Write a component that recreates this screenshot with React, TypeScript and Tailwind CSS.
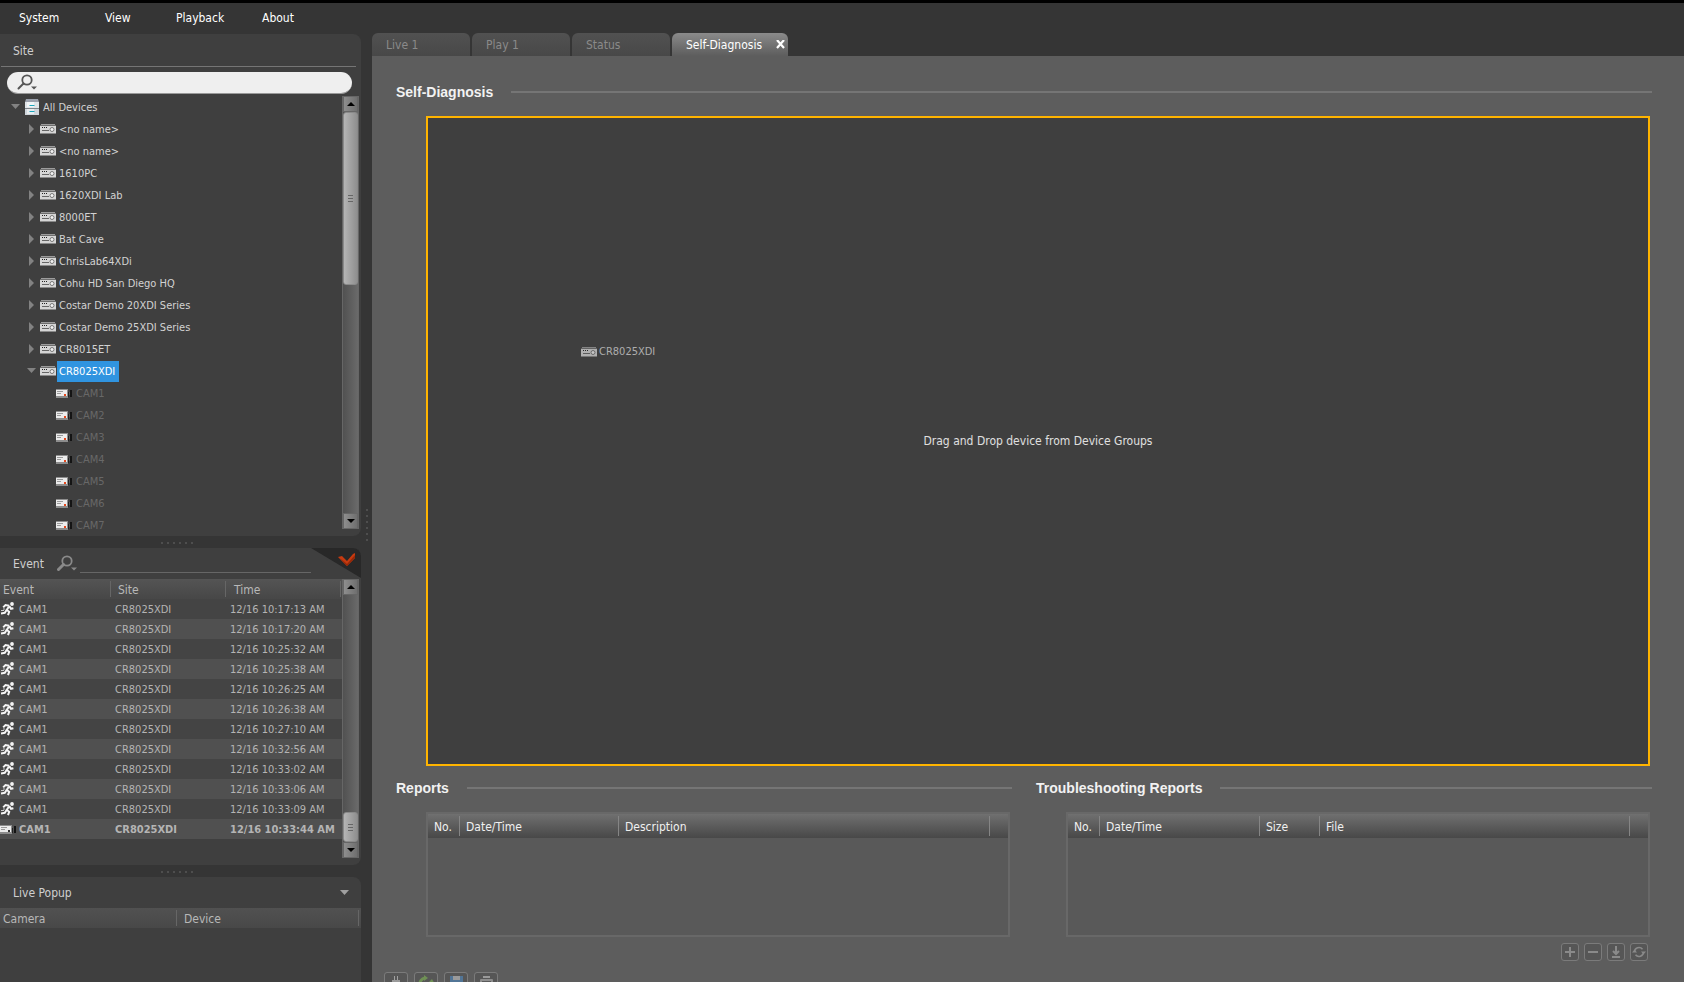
import type { ReactNode } from "react";

const devices = [
  "<no name>",
  "<no name>",
  "1610PC",
  "1620XDI Lab",
  "8000ET",
  "Bat Cave",
  "ChrisLab64XDi",
  "Cohu HD San Diego HQ",
  "Costar Demo 20XDI Series",
  "Costar Demo 25XDI Series",
  "CR8015ET",
];
const cameras = ["CAM1", "CAM2", "CAM3", "CAM4", "CAM5", "CAM6", "CAM7"];
const eventTimes = [
  "12/16 10:17:13 AM",
  "12/16 10:17:20 AM",
  "12/16 10:25:32 AM",
  "12/16 10:25:38 AM",
  "12/16 10:26:25 AM",
  "12/16 10:26:38 AM",
  "12/16 10:27:10 AM",
  "12/16 10:32:56 AM",
  "12/16 10:33:02 AM",
  "12/16 10:33:06 AM",
  "12/16 10:33:09 AM",
  "12/16 10:33:44 AM",
];

function RecorderIcon() {
  return (
    <svg width="16" height="10" viewBox="0 0 16 10" className="shrink-0" aria-hidden="true">
      <rect x="1" y="0" width="14" height="1" fill="#9c9c9c" />
      <rect x="0" y="1" width="16" height="1" fill="#6e6e6e" />
      <rect x="0" y="2" width="16" height="7" fill="#d6d6d6" />
      <rect x="0" y="9" width="16" height="1" fill="#8a8a8a" />
      <path d="M2 3.5h1M4 3.5h1M6 3.5h1" stroke="#222" />
      <path d="M2 6.500h7" stroke="#666" />
      <circle cx="12" cy="5.500" r="2" fill="#f2f2f2" stroke="#777" />
    </svg>
  );
}

function CameraIcon({ led = "#e8481c" }: { led?: string }) {
  return (
    <svg width="16" height="9" viewBox="0 0 16 9" className="shrink-0" aria-hidden="true">
      <rect x="0" y="0" width="12" height="9" fill="#8d8d8d" />
      <rect x="0" y="1" width="11" height="6" fill="#ececec" />
      <path d="M1 2.5h6M1 4.5h4" stroke="#9a9a9a" />
      <rect x="8" y="5" width="2" height="2" fill={led} />
      <rect x="12" y="3" width="1" height="5" fill="#222" />
      <rect x="13" y="3" width="1" height="3" fill="#555" />
      <rect x="14" y="1" width="2" height="7" fill="#141414" />
    </svg>
  );
}

function RunnerIcon() {
  return (
    <svg width="14" height="14" viewBox="0 0 14 14" aria-hidden="true">
      <circle cx="12" cy="2" r="1.9" fill="#f4f4f4" />
      <path
        d="M9.600 3.600L6.500 8.200M9.200 3.800L5.500 3L3.200 5.400M9.600 4.400L11 6.800L13.400 6.200M6.800 8L9.200 9.800L8 13.200M6.600 8L4.800 10.800L1 11.400"
        stroke="#f4f4f4"
        strokeWidth="2"
        fill="none"
      />
      <path d="M1 8.500h3M3 7h2" stroke="#c9c9c9" />
    </svg>
  );
}

function CabinetIcon() {
  return (
    <svg width="14" height="16" viewBox="0 0 14 16" className="shrink-0" aria-hidden="true">
      <path d="M1 0h12l1 3H0z" fill="#9aa0ac" />
      <rect y="3" width="14" height="6" fill="#dfe4e8" />
      <rect y="10" width="14" height="6" fill="#cfd6dc" />
      <rect y="9" width="14" height="1" fill="#7d8389" />
      <rect x="2" y="3" width="7" height="5" fill="#f2f5f7" />
      <rect x="2" y="10" width="7" height="5" fill="#e8ecef" />
      <path d="M4.500 6.500h5M4.500 12.500h5" stroke="#1aa6bd" />
    </svg>
  );
}

function SearchIcon({ color, handle = 2 }: { color: string; handle?: number }) {
  return (
    <svg width="22" height="17" viewBox="0 0 22 17" className="shrink-0" aria-hidden="true">
      <circle cx="10" cy="6" r="4.700" fill="none" stroke={color} strokeWidth="1.800" />
      <path d="M6.500 9.500L1.500 14.500" stroke={color} strokeWidth={handle} strokeLinecap="round" />
      <path d="M14 12.500h6l-3 3z" fill={color} />
    </svg>
  );
}

function Arrow({ open }: { open?: boolean }) {
  return (
    <button aria-label={open ? "Collapse" : "Expand"} className="flex w-4 shrink-0 justify-center">
      <svg width="10" height="10" viewBox="0 0 10 10" fill="#828282" aria-hidden="true">
        {open ? <path d="M0 2h9L4.500 7z" /> : <path d="M2 0l5 5l-5 5z" />}
      </svg>
    </button>
  );
}

function StepButton({ down }: { down?: boolean }) {
  return (
    <button
      aria-label={down ? "Scroll down" : "Scroll up"}
      className="flex h-4 shrink-0 items-center justify-center border border-[#666] bg-linear-to-r from-[#8e8e8e] to-[#6f6f6f]"
    >
      <svg width="8" height="4" viewBox="0 0 8 4" aria-hidden="true">
        {down ? <path d="M0 0h8L4 4z" /> : <path d="M0 4h8L4 0z" />}
      </svg>
    </button>
  );
}

function ScrollBar({ end, thumb }: { end?: boolean; thumb: string }) {
  return (
    <div className="mr-[2px] mb-[7px] flex w-[17px] shrink-0 flex-col border-x border-[#666] bg-linear-to-r from-[#515151] to-[#6a6a6a]">
      <StepButton />
      {end && <div className="flex-1" />}
      <div
        className={`flex flex-col items-center justify-center gap-[2px] rounded-[3px] border border-[#8a8a8a] bg-linear-to-r from-[#b5b5b5] to-[#8f8f8f] ${thumb}`}
      >
        <span className="h-px w-[5px] bg-[#666]" />
        <span className="h-px w-[5px] bg-[#666]" />
        <span className="h-px w-[5px] bg-[#666]" />
      </div>
      {!end && <div className="flex-1" />}
      <StepButton down />
    </div>
  );
}

function Grip({ vertical }: { vertical?: boolean }) {
  return (
    <div className={vertical ? "flex flex-col gap-1" : "flex gap-1"}>
      {[0, 1, 2, 3, 4, 5].map((i) => (
        <span key={i} className="size-[2px] bg-[#4e4e4e]" />
      ))}
    </div>
  );
}

function Splitter() {
  return (
    <div className="flex h-3 shrink-0 items-center justify-center pt-px pr-2">
      <Grip />
    </div>
  );
}

function SectionTitle({ children }: { children: ReactNode }) {
  return (
    <div className="flex h-5 items-center gap-[18px]">
      <h2 className="font-['Liberation_Sans',sans-serif] text-[14px] font-bold whitespace-nowrap text-[#f2f2f2]">
        {children}
      </h2>
      <div className="h-[2px] flex-1 bg-[#757575]" />
    </div>
  );
}

function ReportTable({ label, columns }: { label: string; columns: { name: string; width: string }[] }) {
  return (
    <div className="mr-[2px] ml-[30px] h-[125px] border-2 border-[#686868] bg-[#595959]">
      <table aria-label={label} className="w-full table-fixed border-collapse">
        <thead>
          <tr className="h-6 bg-linear-to-b from-[#707070] to-[#484848] text-left text-[12px] text-[#f0f0f0]">
            {columns.map((c) => (
              <th key={c.name} className={`p-0 font-normal ${c.width}`}>
                <div className="flex h-5 items-center border-r border-[#858585] pt-[2px] pl-[6px]">{c.name}</div>
              </th>
            ))}
            <td className="w-[18px] p-0" />
          </tr>
        </thead>
      </table>
    </div>
  );
}

function ToolButton({ label, children }: { label: string; children: ReactNode }) {
  return (
    <button
      aria-label={label}
      className="flex size-[18px] items-center justify-center rounded-[3px] border border-[#7b7b7b] bg-[#565656]"
    >
      <svg width="14" height="14" viewBox="0 0 14 14" fill="none" stroke="#8a8a8a" strokeWidth="2" aria-hidden="true">
        {children}
      </svg>
    </button>
  );
}

function BottomButton({ label, children }: { label: string; children: ReactNode }) {
  return (
    <button
      aria-label={label}
      className="flex size-6 items-center justify-center rounded-[3px] border border-[#7b7b7b] bg-[#565656]"
    >
      <svg width="18" height="18" viewBox="0 0 18 18" fill="none" aria-hidden="true">
        {children}
      </svg>
    </button>
  );
}

function SitePanel() {
  return (
    <section className="flex min-h-0 flex-1 flex-col rounded-r-lg bg-[#3f3f3f]">
      <h2 className="mr-[5px] ml-px flex h-[33px] shrink-0 items-center border-b border-[#757575] pt-[2px] pl-3 text-[12px] text-[#cfcfcf]">
        Site
      </h2>
      <label className="mt-[5px] mr-[9px] ml-[7px] flex h-[22px] shrink-0 items-center rounded-full border-b border-[#999] bg-[#efefef] pl-[10px]">
        <SearchIcon color="#555" />
        <input aria-label="Search devices" className="min-w-0 flex-1 bg-transparent text-[12px] text-[#222] outline-none" />
      </label>
      <div className="mt-[2px] flex min-h-0 flex-1">
        <ul className="min-w-0 flex-1 overflow-hidden text-[11px] whitespace-nowrap text-[#d2d2d2]">
          <li className="flex h-[22px] items-center pl-2">
            <Arrow open />
            <span className="ml-px flex items-center gap-1">
              <CabinetIcon />
              <span className="pt-[2px]">All Devices</span>
            </span>
          </li>
          {devices.map((d, i) => (
            <li key={i} className="flex h-[22px] items-center pl-6">
              <Arrow />
              <RecorderIcon />
              <span className="pt-[2px] pl-[3px]">{d}</span>
            </li>
          ))}
          <li className="flex h-[22px] items-center pl-6">
            <Arrow open />
            <RecorderIcon />
            <span className="ml-px flex h-[21px] items-center bg-[#3094e0] pt-[2px] pr-1 pl-[2px] text-white">
              CR8025XDI
            </span>
          </li>
          {cameras.map((c) => (
            <li key={c} className="flex h-[22px] items-center gap-1 pl-14 text-[#686868]">
              <CameraIcon />
              <span className="pt-[2px]">{c}</span>
            </li>
          ))}
        </ul>
        <ScrollBar thumb="h-[173px]" />
      </div>
    </section>
  );
}

function EventPanel() {
  return (
    <section className="relative shrink-0 overflow-hidden rounded-r-lg bg-[#3f3f3f]">
      <div className="flex h-[31px] items-center pl-[13px]">
        <h2 className="w-11 text-[12px] text-[#cfcfcf]">Event</h2>
        <label className="flex flex-1 items-center">
          <SearchIcon color="#8a8a8a" handle={3} />
          <input
            aria-label="Search events"
            className="mr-[50px] ml-px h-[19px] min-w-0 flex-1 border-b border-[#666] bg-transparent text-[12px] text-[#ccc] outline-none"
          />
        </label>
      </div>
      <button aria-label="Toggle event filter" className="absolute top-0 right-0">
        <svg width="50" height="31" viewBox="0 0 50 31" aria-hidden="true">
          <path d="M0 0h50v30z" fill="#282828" />
          <path d="M27 9l4-1l5 5l6-7l2-1v5l-8 8z" fill="#c63a10" />
          <path d="M29 10l7 6l8-9v3l-8 8z" fill="#962808" />
        </svg>
      </button>
      <div className="flex">
        <table
          aria-label="Events"
          className="mb-[26px] min-w-0 flex-1 table-fixed border-collapse text-[11px] whitespace-nowrap text-[#b4b4b4]"
        >
          <thead>
            <tr className="h-5 bg-linear-to-b from-[#545454] to-[#474747] text-left text-[12px] text-[#b8b8b8]">
              <th className="w-[111px] p-0 font-normal">
                <div className="flex h-4 items-center border-r border-[#666] pt-[2px] pl-[3px]">Event</div>
              </th>
              <th className="w-[115px] p-0 font-normal">
                <div className="flex h-4 items-center border-r border-[#666] pt-[2px] pl-[7px]">Site</div>
              </th>
              <th className="w-[116px] p-0 font-normal">
                <div className="mr-px flex h-4 items-center border-r border-[#666] pt-[2px] pl-2">Time</div>
              </th>
            </tr>
          </thead>
          <tbody>
            {eventTimes.map((t, i) => {
              const last = i === eventTimes.length - 1;
              return (
                <tr key={t} className={`h-5 ${i % 2 ? "bg-[#505050]" : "bg-[#444]"} ${last ? "font-bold" : ""}`}>
                  <td className="p-0">
                    <div className="flex items-center">
                      <span className="w-[19px]">{last ? <CameraIcon led="#333" /> : <RunnerIcon />}</span>
                      <span className="pt-[2px]">CAM1</span>
                    </div>
                  </td>
                  <td className="p-0 pt-[2px] pl-1">CR8025XDI</td>
                  <td className="p-0 pt-[2px] pl-1">{t}</td>
                </tr>
              );
            })}
          </tbody>
        </table>
        <ScrollBar end thumb="h-[30px]" />
      </div>
    </section>
  );
}

function LivePopupPanel() {
  return (
    <section className="h-[105px] shrink-0 rounded-tr-lg bg-[#3f3f3f]">
      <div className="flex h-[31px] items-center justify-between pr-3 pl-[13px]">
        <h2 className="text-[12px] text-[#cfcfcf]">Live Popup</h2>
        <button aria-label="Live popup options">
          <svg width="9" height="5" viewBox="0 0 9 5" fill="#a0a0a0" aria-hidden="true">
            <path d="M0 0h9L4.500 5z" />
          </svg>
        </button>
      </div>
      <table aria-label="Live popups" className="w-full table-fixed border-collapse">
        <thead>
          <tr className="h-5 bg-linear-to-b from-[#515151] to-[#484848] text-left text-[12px] text-[#b8b8b8]">
            <th className="w-[177px] p-0 font-normal">
              <div className="flex h-4 items-center border-r border-[#666] pt-[2px] pl-[3px]">Camera</div>
            </th>
            <th className="p-0 font-normal">
              <div className="mr-[2px] flex h-4 items-center border-r border-[#666] pt-[2px] pl-[7px]">Device</div>
            </th>
          </tr>
        </thead>
      </table>
    </section>
  );
}

export default function App() {
  return (
    <div className="flex h-screen flex-col overflow-hidden border-t-[3px] border-black bg-[#353535] font-['DejaVu_Sans_Condensed','Noto_Sans',sans-serif]">
      <div className="flex min-h-0 flex-1">
        <aside className="flex w-[361px] shrink-0 flex-col">
          <nav className="flex h-[31px] shrink-0 items-center pb-[2px] pl-[19px] text-[12px] text-white">
            <button className="w-[86px] text-left">System</button>
            <button className="w-[71px] text-left">View</button>
            <button className="w-[86px] text-left">Playback</button>
            <button className="text-left">About</button>
          </nav>
          <SitePanel />
          <Splitter />
          <EventPanel />
          <Splitter />
          <LivePopupPanel />
        </aside>
        <div className="flex w-[11px] shrink-0 items-center justify-center pt-[65px]">
          <Grip vertical />
        </div>
        <main className="flex min-w-0 flex-1 flex-col pt-[30px]">
          <div role="tablist" className="flex h-[23px] shrink-0 gap-[2px] text-[12px] text-[#8a8a8a]">
            {["Live 1", "Play 1", "Status"].map((t) => (
              <button
                key={t}
                role="tab"
                className="w-[98px] rounded-t-md bg-linear-to-b from-[#515151] to-[#484848] pl-[14px] text-left"
              >
                {t}
              </button>
            ))}
            <div className="flex w-[116px] items-center justify-between rounded-t-md bg-linear-to-b from-[#8b8b8b] to-[#5d5d5d] pr-[3px] pl-[14px] text-white">
              <button role="tab" aria-selected="true">
                Self-Diagnosis
              </button>
              <button aria-label="Close tab">
                <svg width="9" height="9" viewBox="0 0 9 9" aria-hidden="true">
                  <path d="M1 0l7 8M8 0l-7 8" stroke="#fff" strokeWidth="2.200" />
                </svg>
              </button>
            </div>
          </div>
          <div className="flex min-h-0 flex-1 flex-col bg-[#5d5d5d] pt-[26px] pr-8 pl-6">
            <SectionTitle>Self-Diagnosis</SectionTitle>
            <div className="relative mt-[14px] mr-[2px] ml-[30px] flex min-h-0 flex-1 items-center justify-center border-2 border-[#ffb400] bg-[#3f3f3f]">
              <p className="text-[12px] text-[#e0e0e0]">Drag and Drop device from Device Groups</p>
              <div className="absolute top-[226px] left-[153px] flex items-center gap-[2px] text-[11px] text-[#d2d2d2] opacity-75">
                <RecorderIcon />
                CR8025XDI
              </div>
            </div>
            <div className="mt-3 grid shrink-0 grid-cols-2 gap-6">
              <section>
                <SectionTitle>Reports</SectionTitle>
                <div className="mt-[14px]">
                  <ReportTable
                    label="Reports"
                    columns={[
                      { name: "No.", width: "w-8" },
                      { name: "Date/Time", width: "w-[159px]" },
                      { name: "Description", width: "" },
                    ]}
                  />
                </div>
              </section>
              <section>
                <SectionTitle>Troubleshooting Reports</SectionTitle>
                <div className="mt-[14px]">
                  <ReportTable
                    label="Troubleshooting Reports"
                    columns={[
                      { name: "No.", width: "w-8" },
                      { name: "Date/Time", width: "w-[160px]" },
                      { name: "Size", width: "w-[60px]" },
                      { name: "File", width: "" },
                    ]}
                  />
                </div>
              </section>
            </div>
            <div className="mt-[6px] mr-1 flex shrink-0 justify-end gap-[5px]">
              <ToolButton label="Add">
                <path d="M7 2v10M2 7h10" />
              </ToolButton>
              <ToolButton label="Remove">
                <path d="M2 7h10" />
              </ToolButton>
              <ToolButton label="Download">
                <path d="M7 1v8M4 6l3 3l3-3M3 12h8" />
              </ToolButton>
              <ToolButton label="Refresh">
                <path d="M2.500 7a4.500 4.500 0 0 1 8-2.800M11.500 7a4.500 4.500 0 0 1-8 2.800" strokeWidth="1.500" />
                <path d="M0 7.500h5l-2.500-3zM9 6.500h5l-2.500 3z" fill="#8a8a8a" stroke="none" />
              </ToolButton>
            </div>
            <div className="mt-[11px] -ml-3 flex h-[10px] shrink-0 gap-[6px]">
              <BottomButton label="Connect">
                <path d="M7.500 1v5M10.500 1v5" stroke="#a0a0a0" />
                <path d="M5 5h8v5l-2 3H7l-2-3z" fill="#9a9a9a" />
              </BottomButton>
              <BottomButton label="Reload">
                <path d="M3 10a6 6 0 0 1 5-7M9 15a6 6 0 0 0 6-8" stroke="#6f9055" strokeWidth="3" />
                <path d="M7 0l4 3l-4 3z" fill="#6f9055" />
                <path d="M12 7l3-3l2 4z" fill="#6f9055" />
              </BottomButton>
              <BottomButton label="Save">
                <rect x="3" y="1" width="13" height="15" fill="#527596" />
                <rect x="6" y="1" width="7" height="4" fill="#9a9a9a" />
              </BottomButton>
              <BottomButton label="Print">
                <rect x="6" y="1" width="7" height="2" fill="#9a9a9a" />
                <rect x="3" y="4" width="13" height="8" rx="1" fill="#8d8d8d" />
                <rect x="5" y="6" width="9" height="2" fill="#5a5a5a" />
              </BottomButton>
            </div>
          </div>
        </main>
      </div>
    </div>
  );
}
